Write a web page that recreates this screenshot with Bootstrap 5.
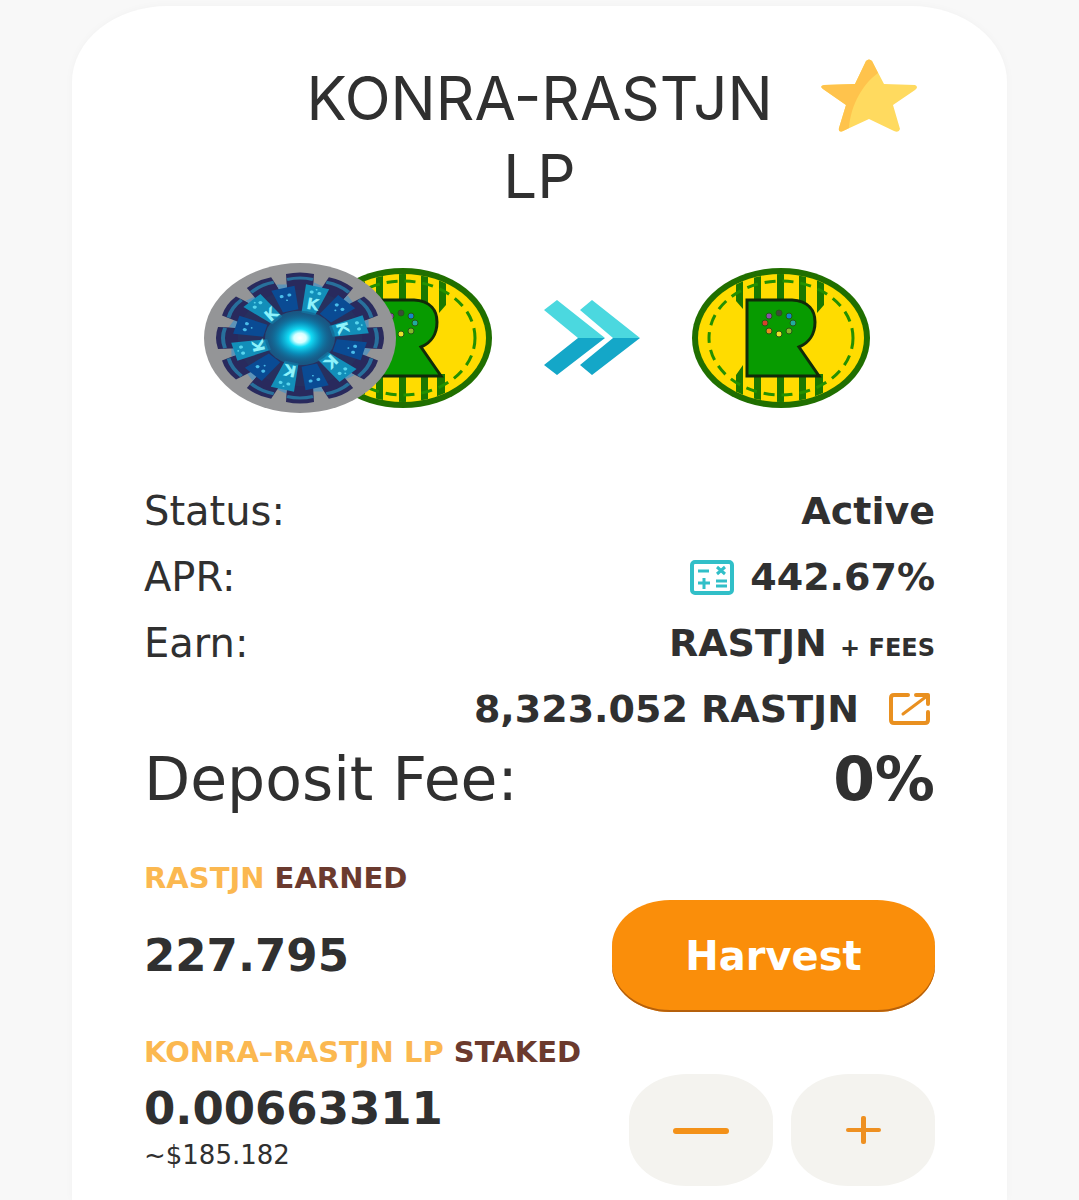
<!DOCTYPE html>
<html lang="en">
<head>
<meta charset="utf-8">
<meta name="viewport" content="width=device-width, initial-scale=1">
<title>KONRA-RASTJN LP farm</title>
<link href="https://cdn.jsdelivr.net/npm/bootstrap@5.3.0/dist/css/bootstrap.min.css" rel="stylesheet">
<style>
body{background:#f8f8f8;color:#303030;font-family:"DejaVu Sans",sans-serif;padding:6px 72px 0}
.farm-card{background:#fff;border-radius:96px 96px 0 0/76px 76px 0 0;padding:53px 72px 14px;box-shadow:0 0 8px rgba(0,0,0,.03);min-height:calc(100vh - 6px)}
.farm-title{font:400 60px/78px Inter,sans-serif}
.pair-row{gap:52px;margin:48px 0 65px;padding-right:6px}
.stat{font-size:38px;line-height:66px}
.stat dt{font-weight:400;font-size:40px}
.stat dd{font-weight:700;margin:0}
.stat .fees{font-size:24px;line-height:1}
.fee-row,.fee-row dt{font-size:60px;line-height:74px}
.section-label{font-size:29px;line-height:44px;font-weight:700;color:#6b3a2e;margin:0}
.section-label .token{color:#fbb850}
.amount{font-size:45px;line-height:50px;font-weight:700}
.worth{font-size:26px;line-height:42px}
.earned{margin:40px 0 18px}
.btn-harvest{width:323px;height:112px;font-size:40px;font-weight:700;color:#fff;background:#fa8e0a;border:0;border-radius:58px/46px;box-shadow:inset 0 -2px 0 #b5600c}
.btn-harvest:hover{background:#e98205;color:#fff}
.btn-step{width:144px;height:112px;background:#f4f3ef;border:0;border-radius:58px/46px}
.plain{background:none;border:0;padding:0;line-height:0}
</style>
</head>
<body>
<svg width="0" height="0" class="position-absolute" aria-hidden="true">
<defs>
<radialGradient id="glow"><stop offset="0" stop-color="#fff"/><stop offset=".18" stop-color="#d8ffff"/><stop offset=".34" stop-color="#12dcf6"/><stop offset=".6" stop-color="#0798c4" stop-opacity=".85"/><stop offset="1" stop-color="#155a86" stop-opacity=".1"/></radialGradient>
<clipPath id="face"><ellipse rx="82" ry="64"/></clipPath>
<g id="band"><path d="M-13-62-14-82Q0-86 14-82L13-62Z" fill="#292a5d"/><path d="M-13-75Q0-79 13-75" fill="none" stroke="#28709c" stroke-width="4"/><path d="M14-71 23-66 18-57 12-60Z" fill="#5d93b8"/></g>
<g id="seatA"><path d="M-12-68H12L7-32H-7Z" fill="#128eb9"/><g fill="#58d5ed"><circle cx="-4" cy="-60" r="2"/><circle cx="4" cy="-60" r="2"/><circle cy="-64" r="1"/></g></g>
<g id="seatB"><path d="M-12-66H12L8-36H-8Z" fill="#0a4b94"/><g fill="#4abce9"><circle cx="-4" cy="-56" r="2"/><circle cx="4" cy="-56" r="2"/><circle cy="-50" r="1"/></g></g>
<g id="konra">
<g transform="scale(1 .78)">
<circle r="96" fill="#949597"/><circle r="66" fill="#27305f"/>
<use href="#band"/><use href="#band" transform="rotate(30)"/><use href="#band" transform="rotate(60)"/><use href="#band" transform="rotate(90)"/><use href="#band" transform="rotate(120)"/><use href="#band" transform="rotate(150)"/><use href="#band" transform="rotate(180)"/><use href="#band" transform="rotate(210)"/><use href="#band" transform="rotate(240)"/><use href="#band" transform="rotate(270)"/><use href="#band" transform="rotate(300)"/><use href="#band" transform="rotate(330)"/>
<use href="#seatA" transform="rotate(15)"/><use href="#seatB" transform="rotate(45)"/><use href="#seatA" transform="rotate(75)"/><use href="#seatB" transform="rotate(105)"/><use href="#seatA" transform="rotate(135)"/><use href="#seatB" transform="rotate(165)"/><use href="#seatA" transform="rotate(195)"/><use href="#seatB" transform="rotate(225)"/><use href="#seatA" transform="rotate(255)"/><use href="#seatB" transform="rotate(285)"/><use href="#seatA" transform="rotate(315)"/><use href="#seatB" transform="rotate(345)"/>
<circle r="35" fill="#146793" opacity=".7"/><circle r="34" fill="url(#glow)"/>
</g>
<g fill="#8ef2fb" font-family="DejaVu Sans" font-weight="700" font-size="16" text-anchor="middle">
<text transform="translate(13 -34) rotate(10)" y="6">K</text><text transform="translate(43 -10) rotate(75)" y="6">K</text><text transform="translate(31 24) rotate(135)" y="6">K</text><text transform="translate(-10 33) rotate(192)" y="6">K</text><text transform="translate(-42 8) rotate(258)" y="6">K</text><text transform="translate(-29 -24) rotate(318)" y="6">K</text>
</g>
</g>
<g id="rastjn">
<ellipse rx="89" ry="70" fill="#206f00"/><ellipse rx="83" ry="64" fill="#ffdc00"/>
<g clip-path="url(#face)" fill="#1a7800">
<path d="M-45-70H-38V-29L-45-37ZM-27-70H-20V-36H-27ZM-4-70H3V-36H-4ZM18-70H25V-34H18ZM36-70H43V-33L36-25Z"/>
<path d="M-45 37-38 27V70H-45ZM-27 36H-20V70H-27ZM-4 36H3V70H-4ZM18 36H25V70H18ZM34 36H42V70H34Z"/>
</g>
<ellipse rx="72" ry="57" fill="none" stroke="#239000" stroke-width="3" stroke-dasharray="11 7"/>
<path d="M-34-38H11C28-37 34-27 34-16 34-4 28 5 18 9L38 38H-34Z" fill="#079b00" stroke="#102b08" stroke-width="3"/>
<g stroke="#255a17"><circle cx="-2" cy="-25" r="3" fill="#3c4b39"/><circle cx="8" cy="-22" r="3" fill="#1784c9"/><circle cx="12" cy="-15" r="3" fill="#22aaa0"/><circle cx="8" cy="-7" r="3" fill="#83b92c"/><circle cx="-2" cy="-4" r="3" fill="#e9e22c"/><circle cx="-12" cy="-7" r="3" fill="#ed8a1e"/><circle cx="-16" cy="-15" r="3" fill="#d8402b"/><circle cx="-12" cy="-22" r="3" fill="#894eaa"/></g>
</g>
</defs>
</svg>

<main class="farm-card">
<header class="row g-0">
<h1 class="farm-title col-8 offset-2 text-center mb-0">KONRA-RASTJN LP</h1>
<div class="col-2 text-center">
<button type="button" class="plain" aria-label="Favourite">
<svg width="96" height="74" viewBox="0 0 96 74"><path d="M45 2Q48-1 51 2L63 25 94 26Q98 28 94 31L72 46 79 70Q78 74 73 72L48 60 22 72Q17 74 18 69L25 46 2 30Q-2 27 3 26L34 25Z" fill="#ffda5f"/><path d="M45 2Q48-1 51 2L57 14C42 25 30 45 28 69L22 72Q17 74 18 69L25 46 2 30Q-2 27 3 26L34 25Z" fill="#ffc34c"/></svg>
</button>
</div>
</header>

<div class="pair-row d-flex justify-content-center align-items-center">
<svg width="288" height="150" viewBox="0 0 288 150"><use href="#rastjn" x="199" y="75"/><use href="#konra" x="96" y="75"/></svg>
<svg width="96" height="76" viewBox="0 0 96 76"><path d="M0 10 13 0 61 38H34ZM36 10 48 0 96 38H69Z" fill="#4bd8df"/><path d="M34 38H61L13 75 0 65ZM69 38H96L48 75 36 65Z" fill="#14a7c8"/></svg>
<svg width="178" height="140" viewBox="0 0 178 140"><use href="#rastjn" x="89" y="70"/></svg>
</div>

<dl class="m-0">
<div class="stat d-flex justify-content-between"><dt>Status:</dt><dd>Active</dd></div>
<div class="stat d-flex justify-content-between"><dt>APR:</dt><dd class="d-flex align-items-center gap-3">
<button type="button" class="plain" aria-label="APR calculator"><svg width="44" height="35" viewBox="0 0 44 35" fill="none" stroke="#31bfc8" stroke-width="3"><rect x="2" y="2" width="40" height="31" rx="3" stroke-width="4"/><path d="M8 11H19M8 23H20M14 18V29M26 21H37M26 26H37M27 7 35 14M35 7 27 14"/></svg></button><span>442.67%</span></dd></div>
<div class="stat d-flex justify-content-between"><dt>Earn:</dt><dd>RASTJN <span class="fees">+ FEES</span></dd></div>
<div class="stat d-flex justify-content-end align-items-center"><dd>8,323.052 RASTJN</dd><dd class="ps-4 pe-1 ms-1 d-flex"><a href="#" aria-label="View contract" class="d-flex"><svg width="44" height="34" viewBox="0 0 44 34" fill="none" stroke="#e99020" stroke-width="4" stroke-linecap="round" stroke-linejoin="round"><path d="M21 3H7Q4 3 4 6V28Q4 31 7 31H38Q41 31 41 28V20M29 3H41V12"/><path d="M16 22 40 4" stroke-width="3"/></svg></a></dd></div>
<div class="stat fee-row d-flex justify-content-between"><dt>Deposit Fee:</dt><dd>0%</dd></div>
</dl>

<section class="earned">
<h2 class="section-label"><span class="token">RASTJN</span> EARNED</h2>
<div class="d-flex justify-content-between align-items-center">
<div class="amount">227.795</div>
<button type="button" class="btn btn-harvest">Harvest</button>
</div>
</section>

<section>
<h2 class="section-label"><span class="token">KONRA–RASTJN LP</span> STAKED</h2>
<div class="d-flex justify-content-between align-items-center">
<div><div class="amount">0.00663311</div><div class="worth">~$185.182</div></div>
<div class="d-flex" style="gap:18px">
<button type="button" class="btn btn-step" aria-label="Unstake"><svg width="56" height="6" viewBox="0 0 56 6"><rect width="56" height="6" rx="3" fill="#f39119"/></svg></button>
<button type="button" class="btn btn-step" aria-label="Stake"><svg width="35" height="28" viewBox="0 0 35 28" fill="#ee9021"><rect y="12" width="35" height="4" rx="2"/><rect x="15" width="5" height="28" rx="2"/></svg></button>
</div>
</div>
</section>
</main>
<script src="https://cdn.jsdelivr.net/npm/bootstrap@5.3.0/dist/js/bootstrap.bundle.min.js"></script>
</body>
</html>
